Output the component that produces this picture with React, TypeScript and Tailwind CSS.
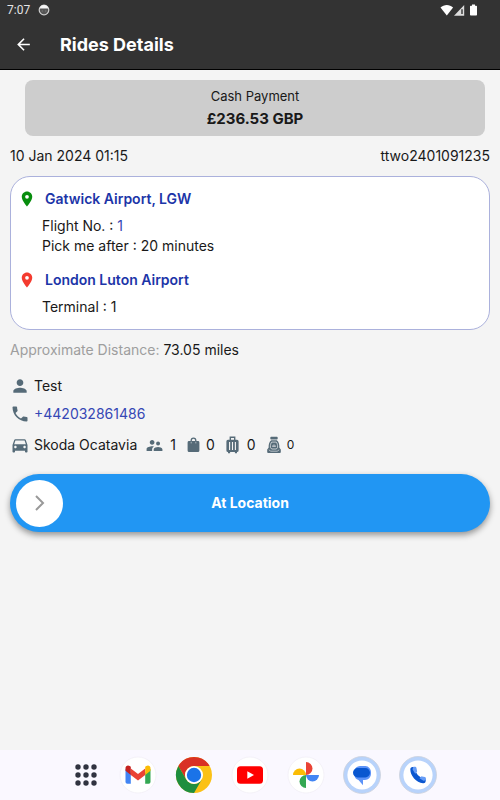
import type { ReactNode } from 'react';
import {
  MdArrowBack,
  MdDirectionsCar,
  MdLocationOn,
  MdPerson,
  MdPhone,
  MdSupervisorAccount,
} from 'react-icons/md';

interface Stop {
  name: string;
  pinClass: string;
  details: { label: string; value: string; href?: string }[];
}

const stops: Stop[] = [
  {
    name: 'Gatwick Airport, LGW',
    pinClass: 'text-[#078d0d]',
    details: [
      { label: 'Flight No.', value: '1', href: '#flight' },
      { label: 'Pick me after', value: '20 minutes' },
    ],
  },
  {
    name: 'London Luton Airport',
    pinClass: 'text-[#f43b2f]',
    details: [{ label: 'Terminal', value: '1' }],
  },
];

function StatusBar() {
  return (
    <div className="flex h-5 items-center px-[7px] font-[Roboto,sans-serif] text-xs text-[#e4e4e4]">
      <span>7:07</span>
      <svg className="ml-2 size-3" viewBox="0 0 12 12" aria-hidden="true">
        <circle cx="6" cy="6" r="4.8" fill="#555" stroke="#cfcfcf" strokeWidth="1.2" />
        <path d="M1.600 4.600C2.200 2 4 1 6 1s3.800 1 4.400 3.600z" fill="#f4f4f4" />
        <path d="M3.800 7h.8M7.400 7h.8" stroke="#999" strokeWidth="1" />
      </svg>
      <svg className="mr-[15px] ml-auto h-3 w-[38px]" viewBox="0 0 38 12" aria-hidden="true">
        <path d="M.5 3.600C4 .2 9.600.2 13.100 3.600L6.800 11.500z" fill="#fff" />
        <path d="M14 11.800L24.200 1v10.800z" fill="#ddd" />
        <path d="M21.300 5.200h1.400v4.900h-1.400z" fill="#333" />
        <path d="M32 .4h3v1.300h1.200q.8 0 .8.800v8.300q0 .8-.8.800h-5.400q-.8 0-.8-.8V2.500q0-.8.800-.8H32z" fill="#fff" />
      </svg>
    </div>
  );
}

function BagIcon() {
  return (
    <svg className="h-4 w-[13px]" viewBox="0 0 13 16" aria-hidden="true">
      <path d="M4.200 5V3.400a2.300 2.300 0 0 1 4.600 0V5" fill="none" stroke="currentColor" strokeWidth="1.300" />
      <path d="M2 4h9a1.400 1.400 0 0 1 1.400 1.400v8.100A1.500 1.500 0 0 1 10.900 15H2.100a1.500 1.500 0 0 1-1.500-1.500V5.400A1.400 1.400 0 0 1 2 4z" fill="currentColor" />
      <path d="M4.200 4.800v1.600M8.800 4.800v1.600" stroke="#c4cbd0" strokeWidth=".8" />
    </svg>
  );
}

function SuitcaseIcon() {
  return (
    <svg className="h-[18px] w-[13px]" viewBox="0 0 13 18" aria-hidden="true">
      <path d="M4.300 4V1.300h4.400V4" fill="none" stroke="currentColor" strokeWidth="1.400" />
      <path d="M2 3.700h9a1.600 1.600 0 0 1 1.600 1.600v9.100A1.600 1.600 0 0 1 11 16v1.200H8.900V16H4.100v1.200H2V16A1.600 1.600 0 0 1 .4 14.400V5.300A1.600 1.600 0 0 1 2 3.700z" fill="currentColor" />
      <path d="M3.600 6v8M6.500 6v8M9.400 6v8" stroke="#f4f4f4" strokeWidth="1.100" />
    </svg>
  );
}

function ChildSeatIcon() {
  return (
    <svg className="h-[18px] w-[14px]" viewBox="0 0 14 18" aria-hidden="true">
      <rect x="3.300" y=".8" width="7.400" height="2.700" rx=".9" fill="currentColor" />
      <path d="M4.200 4.300h5.600c1.900 1.500 2.700 4 2.600 7.400l1.400 1.800v2.600q0 .9-.9.900H1.100q-.9 0-.9-.9v-2.600l1.400-1.800c-.1-3.400.7-5.900 2.600-7.400z" fill="currentColor" />
      <path d="M4.700 6.100h4.600c1 1.200 1.400 2.900 1.300 5.300L9.400 13H4.600l-1.200-1.600c-.1-2.400.3-4.100 1.300-5.300z" fill="none" stroke="#dfe3e6" strokeWidth=".8" />
      <path d="M5.500 10.500a1.500 1.500 0 0 1 3 0zM1.800 13.800l2 1.400h6.400l2-1.400" fill="none" stroke="#dfe3e6" strokeWidth=".7" />
    </svg>
  );
}

function Count({ icon, label, children }: { icon: ReactNode; label: string; children: ReactNode }) {
  return (
    <span className="flex items-center gap-[6px]" title={label}>
      <span className="text-[#566b78]">{icon}</span>
      {children}
    </span>
  );
}

function AppDock() {
  return (
    <nav className="mt-auto flex h-[50px] items-center justify-center bg-[#faf8ff] pl-2" aria-label="Apps">
      <ul className="flex items-center gap-4">
        <li>
          <button className="flex h-10 w-8 items-center justify-center" aria-label="All apps">
            <svg className="size-[22px]" viewBox="0 0 22 22" fill="#303340">
              {[3, 11, 19].map((y) =>
                [3, 11, 19].map((x) => <circle key={`${x}-${y}`} cx={x} cy={y} r="2.700" />)
              )}
            </svg>
          </button>
        </li>
        <li>
          <button className="flex size-10 items-center justify-center" aria-label="Gmail">
            <svg className="size-[38px]" viewBox="0 0 38 38">
              <circle cx="19" cy="19" r="18" fill="#fff" stroke="#efedf3" strokeWidth=".7" />
              <path d="M6.500 13v13q0 1.800 1.800 1.800h3.500V17z" fill="#4285f4" />
              <path d="M31.500 13v13q0 1.800-1.800 1.800h-3.500V17z" fill="#34a853" />
              <path d="M11.800 12.500L19 18l7.200-5.500V19L19 24.500 11.800 19z" fill="#ea4335" />
              <path d="M6.500 14.800V12c0-2.300 2.500-3.300 4.200-2l1.100.8V19z" fill="#c5221f" />
              <path d="M31.500 14.800V12c0-2.300-2.500-3.300-4.200-2l-1.100.8V19z" fill="#fbbc04" />
            </svg>
          </button>
        </li>
        <li>
          <button className="flex size-10 items-center justify-center" aria-label="Chrome">
            <svg className="size-[38px]" viewBox="0 0 38 38">
              <circle cx="19" cy="19" r="18" fill="#fbc116" />
              <path d="M3.410 10A18 18 0 0 1 34.590 10H19A9 9 0 0 0 11.210 23.500z" fill="#d93025" />
              <path d="M3.410 10A18 18 0 0 0 19 37l7.790-13.500A9 9 0 0 1 11.210 23.500z" fill="#1e8e3e" />
              <circle cx="19" cy="19" r="9" fill="#fff" />
              <circle cx="19" cy="19" r="7.200" fill="#1a73e8" />
            </svg>
          </button>
        </li>
        <li>
          <button className="flex size-10 items-center justify-center" aria-label="YouTube">
            <svg className="size-[38px]" viewBox="0 0 38 38">
              <circle cx="19" cy="19" r="18" fill="#fff" stroke="#efedf3" strokeWidth=".7" />
              <rect x="6" y="10.300" width="26" height="17.400" rx="3.500" fill="#f00" />
              <path d="M16.300 15.200v7.600L23 19z" fill="#fff" />
            </svg>
          </button>
        </li>
        <li>
          <button className="flex size-10 items-center justify-center" aria-label="Photos">
            <svg className="size-[38px]" viewBox="0 0 38 38">
              <circle cx="19" cy="19" r="18" fill="#fff" stroke="#efedf3" strokeWidth=".7" />
              <path d="M19 6a6.500 6.500 0 0 1 0 13z" fill="#ea4335" />
              <path d="M32 19a6.500 6.500 0 0 1-13 0z" fill="#4285f4" />
              <path d="M19 32a6.500 6.500 0 0 1 0-13z" fill="#34a853" />
              <path d="M6 19a6.500 6.500 0 0 1 13 0z" fill="#fbbc04" />
            </svg>
          </button>
        </li>
        <li>
          <button className="flex size-10 items-center justify-center" aria-label="Messages">
            <svg className="size-[38px]" viewBox="0 0 38 38">
              <circle cx="19" cy="19" r="18.500" fill="#b8d3fb" stroke="#ccd0dc" strokeWidth=".8" />
              <circle cx="19" cy="19" r="14.600" fill="#fff" />
              <path d="M17 10h5.500a6 6 0 0 1 5.500 6v2a6 6 0 0 1-6 6h-2v5.200L15.500 24a5.500 5.500 0 0 1-4-5v-3.500a5.500 5.500 0 0 1 5.500-5.500z" fill="#5c93f8" />
              <rect x="10" y="12" width="17" height="9.500" rx="4.700" fill="#0957d0" />
            </svg>
          </button>
        </li>
        <li>
          <button className="flex size-10 items-center justify-center" aria-label="Phone">
            <svg className="size-[38px]" viewBox="0 0 38 38">
              <circle cx="19" cy="19" r="18.500" fill="#b8d3fb" stroke="#ccd0dc" strokeWidth=".8" />
              <circle cx="19" cy="19" r="14.600" fill="#fff" />
              <path d="M13.800 13.500c.2 5.200 4.600 10.400 10.500 11.200" fill="none" stroke="#0b57d0" strokeWidth="5" strokeLinecap="round" />
              <path d="M14.500 10.800h1.700q1 0 1.200 1l.7 3.200q.1.700-.4 1.200l-1.500 1.500-2.700-4.500z" fill="#669df6" />
              <path d="M26.900 24.200v-2q0-1-1-1.200l-2.800-.6q-.7-.2-1.200.4L20.500 22.300l4 2.400z" fill="#669df6" />
            </svg>
          </button>
        </li>
      </ul>
    </nav>
  );
}

export default function App() {
  return (
    <div className="flex min-h-screen flex-col bg-[#f4f4f4] font-[Inter,sans-serif] text-sm text-[#191919]">
      <header className="border-b border-black bg-[#333]">
        <StatusBar />
        <div className="flex h-[49px] items-center pl-[14px]">
          <button className="text-white" aria-label="Back">
            <MdArrowBack size={19} />
          </button>
          <h1 className="ml-[27px] text-lg font-bold text-white">Rides Details</h1>
        </div>
      </header>

      <main className="px-[10px] pt-[10px] pb-8">
        <section className="mr-[5px] ml-[15px] rounded-lg bg-[#cdcdcd] py-[5px] text-center">
          <p className="text-[13px] leading-[22px]">Cash Payment</p>
          <p className="text-[15px] leading-6 font-bold">£236.53 GBP</p>
        </section>

        <div className="mt-[10px] flex justify-between leading-5">
          <time dateTime="2024-01-10T01:15">10 Jan 2024 01:15</time>
          <span>ttwo2401091235</span>
        </div>

        <section className="mt-[10px] flex flex-col gap-[14px] rounded-[20px] border border-[#abb1dc] bg-white px-[7px] py-3">
          {stops.map((stop) => (
            <div key={stop.name}>
              <h2 className="flex items-center gap-[9px] leading-5 font-semibold text-[#1c35a8]">
                <MdLocationOn size={18} className={stop.pinClass} />
                {stop.name}
              </h2>
              <div className="mt-[7px] ml-6 leading-5">
                {stop.details.map((d) => (
                  <p key={d.label}>
                    {d.label} :{' '}
                    {d.href ? (
                      <a href={d.href} className="text-[#3547b5]">
                        {d.value}
                      </a>
                    ) : (
                      d.value
                    )}
                  </p>
                ))}
              </div>
            </div>
          ))}
        </section>

        <p className="mt-[10px] leading-5">
          <span className="text-[#9e9e9e]">Approximate Distance:</span> 73.05 miles
        </p>

        <div className="mt-4 flex items-center gap-1 leading-5">
          <MdPerson size={20} className="text-[#566b78]" />
          Test
        </div>
        <div className="mt-2 flex items-center gap-1 leading-5">
          <MdPhone size={20} className="text-[#566b78]" />
          <a href="tel:+442032861486" className="text-[#3547b5]">
            +442032861486
          </a>
        </div>
        <div className="mt-[11px] flex items-center gap-1 leading-5">
          <MdDirectionsCar size={20} className="text-[#566b78]" />
          <span>Skoda Ocatavia</span>
          <div className="ml-1 flex items-center gap-[11px]">
            <Count label="Passengers" icon={<MdSupervisorAccount size={19} />}>1</Count>
            <Count label="Hand luggage" icon={<BagIcon />}>0</Count>
            <Count label="Suitcases" icon={<SuitcaseIcon />}>
              <span className="ml-[2px]">0</span>
            </Count>
            <Count label="Child seats" icon={<ChildSeatIcon />}>
              <span className="text-xs">0</span>
            </Count>
          </div>
        </div>

        <button className="mt-[19px] grid h-[58px] w-full grid-cols-[47px_1fr_47px] items-center rounded-full bg-[#2196f3] px-[6px] font-bold text-white shadow-[0_3px_6px_rgba(0,0,0,0.4)]">
          <span className="flex size-[47px] items-center justify-center rounded-full bg-white">
            <svg className="h-4 w-[10px]" viewBox="0 0 10 16" fill="none" stroke="#999" strokeWidth="2" aria-hidden="true">
              <path d="M1 1l7 7-7 7" />
            </svg>
          </span>
          At Location
        </button>
      </main>

      <AppDock />
    </div>
  );
}
